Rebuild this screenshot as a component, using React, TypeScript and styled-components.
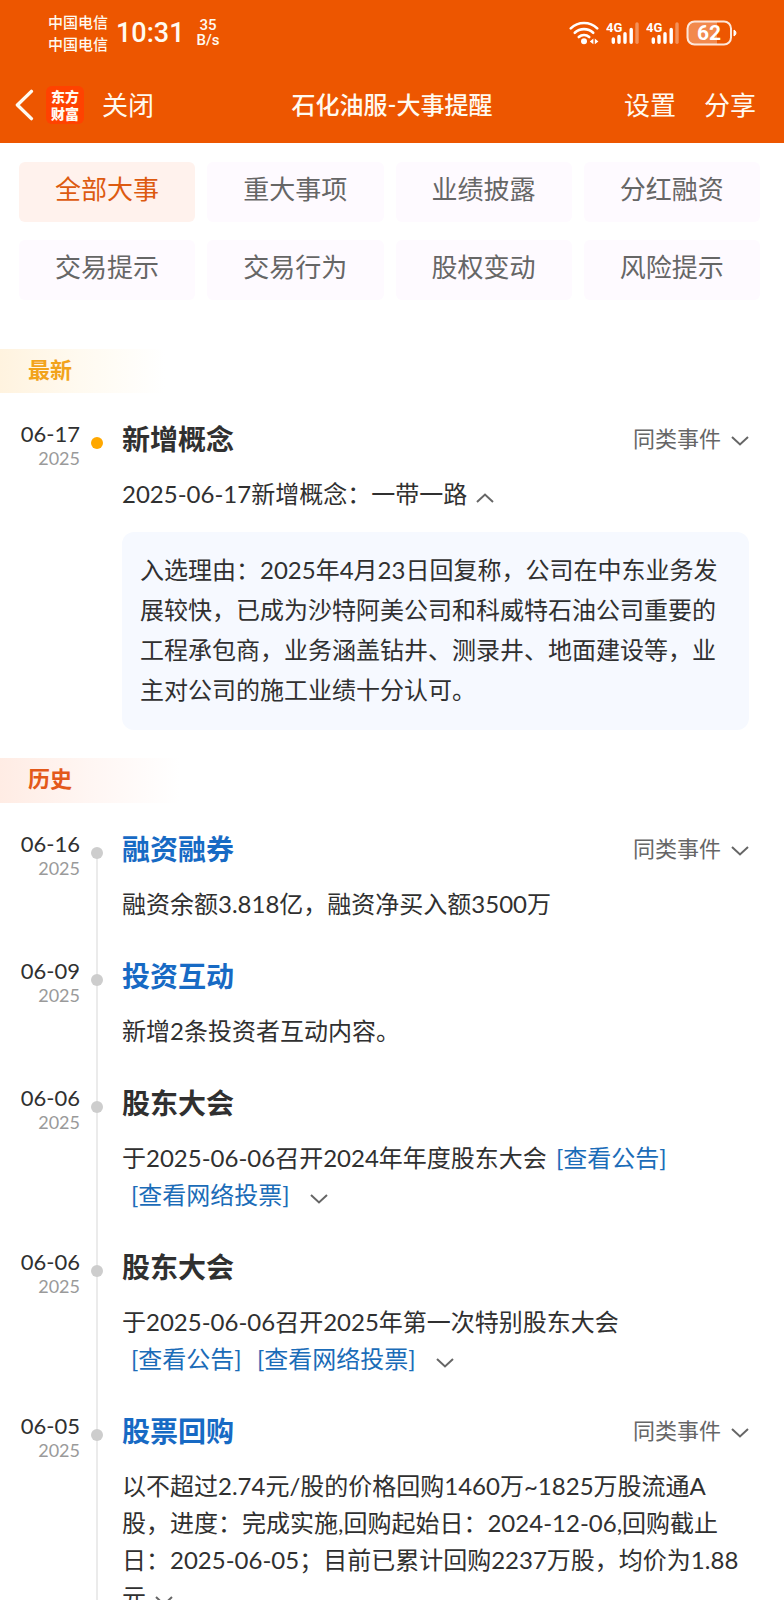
import React from 'react';
import styled, { createGlobalStyle } from 'styled-components';

const GlobalStyle = createGlobalStyle`
  *, *::before, *::after { box-sizing: border-box; }
  body {
    margin: 0;
    background: #fff;
    color: #303030;
    font-family: Lato, "Noto Sans CJK SC", sans-serif;
    font-size: 24px;
  }
  button {
    margin: 0;
    padding: 0;
    border: 0;
    background: none;
    color: inherit;
    font: inherit;
    cursor: pointer;
  }
  h1, h2, h3, p, ul, ol { margin: 0; padding: 0; font: inherit; list-style: none; }
  a { color: inherit; text-decoration: none; }
  svg { display: block; }
`;

const Screen = styled.div`
  display: flex;
  flex-direction: column;
  height: 100vh;
`;

const Header = styled.header`
  flex: none;
  background: #ed5600;
  color: #fffaf0;
`;

const StatusBar = styled.div`
  display: flex;
  align-items: center;
  justify-content: space-between;
  height: 66px;
  padding: 0 47px 0 48px;
`;

const StatusGroup = styled.div<{ $gap: number }>`
  display: flex;
  align-items: center;
  gap: ${(p) => p.$gap}px;
`;

const Carriers = styled.div`
  font-size: 15px;
  font-weight: 500;
  line-height: 22px;
`;

const Clock = styled.time`
  font-family: Roboto, sans-serif;
  font-size: 27px;
  font-weight: 500;
  line-height: 32px;
`;

const NetSpeed = styled.div`
  margin-left: 4px;
  font-family: Roboto, sans-serif;
  font-size: 15px;
  font-weight: 500;
  line-height: 15px;
  text-align: center;
`;

const NavBar = styled.nav`
  display: grid;
  grid-template-columns: 1fr auto 1fr;
  align-items: center;
  height: 77px;
`;

const NavSide = styled.div<{ $end?: boolean }>`
  display: flex;
  align-items: center;
  justify-content: ${(p) => (p.$end ? 'flex-end' : 'flex-start')};
  gap: ${(p) => (p.$end ? 28 : 0)}px;
  padding: ${(p) => (p.$end ? '0 28px 0 0' : '0 0 0 15px')};
`;

const NavButton = styled.button`
  font-size: 26px;
  line-height: 36px;
`;

const Logo = styled.div`
  display: grid;
  place-content: center;
  width: 38px;
  height: 38px;
  margin: 0 18px 0 12px;
  border-radius: 6px;
  background: #ff4200;
  font-size: 14px;
  font-weight: 900;
  line-height: 17px;
`;

const PageTitle = styled.h1`
  font-size: 24px;
  font-weight: 500;
  line-height: 36px;
`;

const Feed = styled.main`
  flex: 1;
  min-height: 0;
  overflow-y: auto;
  scrollbar-width: none;
`;

const Filters = styled.div`
  display: grid;
  grid-template-columns: repeat(4, 1fr);
  gap: 18px 12px;
  padding: 19px 24px 49px 19px;
`;

const Chip = styled.button<{ $active: boolean }>`
  height: 60px;
  padding-bottom: 9px;
  border-radius: 6px;
  background: ${(p) => (p.$active ? '#fff2ed' : '#fefaff')};
  color: ${(p) => (p.$active ? '#dd5a10' : '#666')};
  font-size: 26px;
`;

const SectionTag = styled.h2<{ $tone: 'new' | 'history' }>`
  height: ${(p) => (p.$tone === 'new' ? 44 : 45)}px;
  padding-left: 28px;
  background: linear-gradient(
    to right,
    ${(p) => (p.$tone === 'new' ? '#fff3df, #fffaf0 80px, #fff 165px' : '#ffece4, #fff6f3 90px, #fff 180px')}
  );
  color: ${(p) => (p.$tone === 'new' ? '#f2a31b' : '#e3591a')};
  font-size: 22px;
  font-weight: 700;
  line-height: 42px;
`;

const Timeline = styled.ol`
  padding: 26px 35px 0 0;
`;

const Entry = styled.li`
  display: grid;
  grid-template-columns: 80px 12px minmax(0, 1fr);
  column-gap: 11px;
`;

const DateCell = styled.time`
  text-align: right;
`;

const Day = styled.div`
  font-size: 22px;
  line-height: 29px;
`;

const Year = styled.div`
  color: #9a9a9a;
  font-size: 18px;
  line-height: 20px;
`;

const Rail = styled.div<{ $line: 'none' | 'start' | 'full' }>`
  padding-top: 18px;
  background: ${(p) =>
    p.$line === 'none'
      ? 'none'
      : `linear-gradient(#ebebeb, #ebebeb) center ${p.$line === 'start' ? '24px' : '0'} / 2px 100% no-repeat`};
`;

const Dot = styled.div<{ $highlight: boolean }>`
  height: 12px;
  border-radius: 50%;
  background: ${(p) => (p.$highlight ? '#ffa800' : '#cdcdcd')};
`;

const Content = styled.article<{ $last: boolean }>`
  padding: 0 0 ${(p) => (p.$last ? 28 : 34)}px 8px;
`;

const TitleRow = styled.div`
  display: flex;
  align-items: center;
  justify-content: space-between;
  height: 40px;
  margin-bottom: 16px;
`;

const EntryTitle = styled.h3<{ $link: boolean }>`
  color: ${(p) => (p.$link ? '#176ac4' : '#303030')};
  font-size: 28px;
  font-weight: 700;
  line-height: 40px;
`;

const SimilarButton = styled.button`
  display: flex;
  align-items: center;
  gap: 10px;
  color: #666;
  font-size: 22px;
  line-height: 38px;

  svg { margin-top: 4px; }
`;

const Summary = styled.p`
  line-height: 37px;
`;

const DocLink = styled.a`
  display: inline-block;
  margin-left: 9px;
  color: #1b6cb8;
`;

const ToggleButton = styled.button<{ $wide: boolean }>`
  margin-left: ${(p) => (p.$wide ? 20 : 9)}px;
  color: #666;
`;

const ReasonBox = styled.div`
  margin-top: 20px;
  padding: 18px 18px 20px;
  border-radius: 12px;
  background: #f6f9ff;
  line-height: 40px;
`;

const Chevron = ({ up = false }: { up?: boolean }) => (
  <svg width="18" height="10" viewBox="0 0 18 10" fill="none" stroke="currentColor" strokeWidth="2" aria-hidden="true">
    <path d={up ? 'M1 9 9 1.5 17 9' : 'M1 1 9 8.5 17 1'} />
  </svg>
);

const BackIcon = () => (
  <svg width="19" height="32" viewBox="0 0 19 32" fill="none" stroke="currentColor" strokeWidth="3.4" strokeLinecap="round" strokeLinejoin="round">
    <path d="M16.4 2.4 2.4 16l14 13.6" />
  </svg>
);

const WifiIcon = () => (
  <svg width="30" height="24" viewBox="0 0 30 24" fill="none" stroke="#fff" strokeWidth="2.6" strokeLinecap="round" aria-label="Wi-Fi">
    <path d="M1.8 7.4a19 19 0 0 1 26.4 0" />
    <path d="M5.8 11.8a13.4 13.4 0 0 1 18.4 0" />
    <path d="M9.8 16a7.6 7.6 0 0 1 10.4 0" />
    <circle cx="15" cy="20.2" r="3" fill="#fff" stroke="none" />
    <path d="M24.4 17.6v5.6l-3.6-2.8zM25.8 17.6v5.6l3.6-2.8z" fill="#fff" stroke="none" />
  </svg>
);

const SignalIcon = () => (
  <svg width="33" height="24" viewBox="0 0 33 24" stroke="#fff" strokeWidth="3.4" strokeLinecap="round" aria-label="4G">
    <text x="0" y="11" fill="#fff" stroke="none" fontFamily="Roboto, sans-serif" fontSize="13" fontWeight="700">4G</text>
    <path d="M7.3 18v3.3M13 15.5v5.8M19 12.8v8.5M25.2 8.5v12.8" />
    <path d="M31 3v18.3" opacity=".35" />
  </svg>
);

const BatteryIcon = () => (
  <svg width="51" height="26" viewBox="0 0 51 26" aria-label="62%">
    <path d="M8 2h23v22H8a6 6 0 0 1-6-6V8a6 6 0 0 1 6-6z" fill="#fff" opacity=".3" />
    <rect x="1.5" y="1.5" width="43.5" height="23" rx="7" fill="none" stroke="#fff" strokeOpacity=".85" strokeWidth="2" />
    <path d="M48 10v6a3.4 3.4 0 0 0 2-3 3.4 3.4 0 0 0-2-3z" fill="#fff" stroke="#fff" />
    <text x="23" y="20.4" fill="#fff" fontFamily="Roboto, sans-serif" fontSize="21" fontWeight="700" textAnchor="middle">62</text>
  </svg>
);

const filters = ['全部大事', '重大事项', '业绩披露', '分红融资', '交易提示', '交易行为', '股权变动', '风险提示'];

type Event = {
  day: string;
  title: string;
  linked?: boolean;
  similar?: boolean;
  summary: string;
  breakBeforeLinks?: boolean;
  links?: string[];
  toggle?: 'up' | 'down';
  reason?: string;
};

const latest: Event[] = [
  {
    day: '06-17',
    title: '新增概念',
    similar: true,
    summary: '2025-06-17新增概念：一带一路',
    toggle: 'up',
    reason:
      '入选理由：2025年4月23日回复称，公司在中东业务发展较快，已成为沙特阿美公司和科威特石油公司重要的工程承包商，业务涵盖钻井、测录井、地面建设等，业主对公司的施工业绩十分认可。',
  },
];

const history: Event[] = [
  { day: '06-16', title: '融资融券', linked: true, similar: true, summary: '融资余额3.818亿，融资净买入额3500万' },
  { day: '06-09', title: '投资互动', linked: true, summary: '新增2条投资者互动内容。' },
  {
    day: '06-06',
    title: '股东大会',
    summary: '于2025-06-06召开2024年年度股东大会',
    links: ['查看公告', '查看网络投票'],
    toggle: 'down',
  },
  {
    day: '06-06',
    title: '股东大会',
    summary: '于2025-06-06召开2025年第一次特别股东大会',
    breakBeforeLinks: true,
    links: ['查看公告', '查看网络投票'],
    toggle: 'down',
  },
  {
    day: '06-05',
    title: '股票回购',
    linked: true,
    similar: true,
    summary:
      '以不超过2.74元/股的价格回购1460万~1825万股流通A股，进度：完成实施,回购起始日：2024-12-06,回购截止日：2025-06-05；目前已累计回购2237万股，均价为1.88元',
    toggle: 'down',
  },
];

const EventList = ({ events, highlight = false }: { events: Event[]; highlight?: boolean }) => (
  <Timeline>
    {events.map((e, i) => (
      <Entry key={i}>
        <DateCell dateTime={`2025-${e.day}`}>
          <Day>{e.day}</Day>
          <Year>2025</Year>
        </DateCell>
        <Rail $line={highlight ? 'none' : i === 0 ? 'start' : 'full'}>
          <Dot $highlight={highlight} />
        </Rail>
        <Content $last={i === events.length - 1}>
          <TitleRow>
            <EntryTitle $link={!!e.linked}>{e.linked ? <a href="#event">{e.title}</a> : e.title}</EntryTitle>
            {e.similar && (
              <SimilarButton type="button">
                同类事件
                <Chevron />
              </SimilarButton>
            )}
          </TitleRow>
          <Summary>
            {e.summary}
            {e.breakBeforeLinks && <br />}
            {e.links?.map((label, n) => (
              <React.Fragment key={label}>
                {n > 0 && ' '}
                <DocLink href="#notice">[{label}]</DocLink>
              </React.Fragment>
            ))}
            {e.toggle && (
              <ToggleButton type="button" $wide={!!e.links} aria-label={e.toggle === 'up' ? '收起' : '展开'}>
                <Chevron up={e.toggle === 'up'} />
              </ToggleButton>
            )}
          </Summary>
          {e.reason && <ReasonBox>{e.reason}</ReasonBox>}
        </Content>
      </Entry>
    ))}
  </Timeline>
);

export default function App() {
  const [active, setActive] = React.useState(filters[0]);
  return (
    <Screen>
      <GlobalStyle />
      <Header>
        <StatusBar>
          <StatusGroup $gap={8}>
            <Carriers>
              <div>中国电信</div>
              <div>中国电信</div>
            </Carriers>
            <Clock>10:31</Clock>
            <NetSpeed>
              <div>35</div>
              <div>B/s</div>
            </NetSpeed>
          </StatusGroup>
          <StatusGroup $gap={7}>
            <WifiIcon />
            <SignalIcon />
            <SignalIcon />
            <BatteryIcon />
          </StatusGroup>
        </StatusBar>
        <NavBar>
          <NavSide>
            <button type="button" aria-label="返回"><BackIcon /></button>
            <Logo>
              <span>东方</span>
              <span>财富</span>
            </Logo>
            <NavButton type="button">关闭</NavButton>
          </NavSide>
          <PageTitle>石化油服-大事提醒</PageTitle>
          <NavSide $end>
            <NavButton type="button">设置</NavButton>
            <NavButton type="button">分享</NavButton>
          </NavSide>
        </NavBar>
      </Header>
      <Feed>
        <Filters>
          {filters.map((f) => (
            <Chip key={f} type="button" $active={f === active} onClick={() => setActive(f)}>
              {f}
            </Chip>
          ))}
        </Filters>
        <section>
          <SectionTag $tone="new">最新</SectionTag>
          <EventList events={latest} highlight />
        </section>
        <section>
          <SectionTag $tone="history">历史</SectionTag>
          <EventList events={history} />
        </section>
      </Feed>
    </Screen>
  );
}
